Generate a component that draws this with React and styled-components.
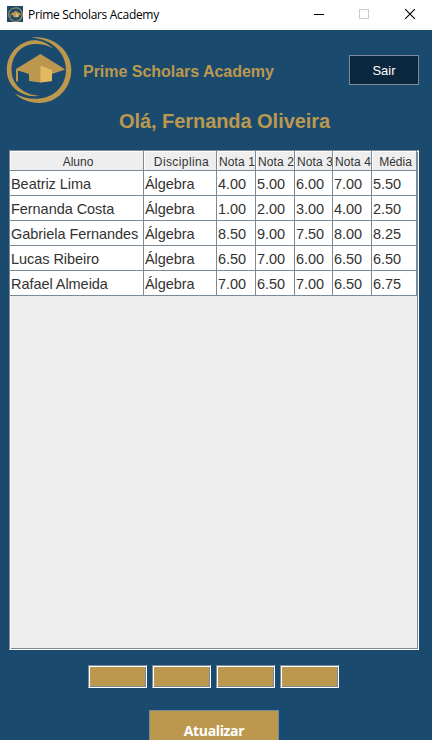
import React from "react";
import styled, { createGlobalStyle, css } from "styled-components";

const navy = "#1a4b6e";
const gold = "#bc984e";
const line = "#7a8a99";

const GlobalStyle = createGlobalStyle`
  * { box-sizing: border-box; }
  html, body { margin: 0; padding: 0; overflow: hidden; }
`;

const Window = styled.div`
  display: flex;
  flex-direction: column;
  width: 432px;
  height: 740px;
  overflow: hidden;
  background: ${navy};
  font-family: "Liberation Sans", Arial, sans-serif;
`;

const TitleBar = styled.header`
  display: flex;
  align-items: center;
  flex: none;
  height: 30px;
  padding-left: 7px;
  background: #fff;
`;

const AppIcon = styled.span`
  display: flex;
  align-items: center;
  justify-content: center;
  width: 16px;
  height: 16px;
  margin: 0 5px 2px 0;
  background: ${navy};
`;

const WindowTitle = styled.span`
  flex: 1;
  padding-bottom: 1px;
  font: 12px/16px "Open Sans", sans-serif;
  letter-spacing: -0.31px;
  white-space: nowrap;
  color: #000;
`;

const WindowControl = styled.span`
  display: flex;
  align-items: center;
  justify-content: center;
  width: 45.5px;
  height: 30px;
  padding: 0 0 2px 1px;
  color: ${(p) => (p.$disabled ? "#ccc" : "#000")};
`;

const Header = styled.div`
  display: flex;
  align-items: center;
  flex: none;
  height: 80px;
  padding: 0 13px 0 6px;
`;

const Brand = styled.span`
  flex: 1;
  margin: 3px 0 0 11px;
  font-size: 16px;
  font-weight: bold;
  letter-spacing: -0.03px;
  white-space: nowrap;
  color: ${gold};
`;

const Button = styled.button`
  flex: none;
  padding: 0;
  border: 1px solid ${line};
  border-radius: 0;
  color: #fff;
`;

const LogoutButton = styled(Button)`
  width: 70px;
  height: 30px;
  background: #0b273d;
  font: 13px "Liberation Sans", Arial, sans-serif;
`;

const RefreshButton = styled(Button)`
  align-self: center;
  width: 130px;
  height: 42px;
  margin: 22px 4px 0 0;
  padding-bottom: 2px;
  background: ${gold};
  font: bold 14px "Open Sans", sans-serif;
  letter-spacing: -0.35px;
`;

const Greeting = styled.h1`
  flex: none;
  height: 40px;
  margin: 0;
  padding-left: 17px;
  font-size: 20px;
  line-height: 22px;
  letter-spacing: -0.05px;
  text-align: center;
  color: ${gold};
`;

const etched = css`
  border: 1px solid;
  border-color: ${line} #fff #fff ${line};
  box-shadow: inset 1px 1px #fff, inset -1px -1px ${line};
`;

const TablePane = styled.div`
  flex: none;
  width: 410px;
  height: 500px;
  margin-left: 9px;
  background: #eee;
  ${etched}
`;

const Row = styled.div`
  display: grid;
  grid-template-columns: 134px 73px 39px 39px 38px 39px 45px;
  width: 407px;
`;

const HeadCell = styled.div`
  height: 20px;
  overflow: hidden;
  border-right: 1px solid ${line};
  border-bottom: 1px solid ${line};
  box-shadow: inset 1px 1px #fff;
  background: #eee;
  font-size: 12px;
  line-height: 22px;
  letter-spacing: ${(p) => p.$spacing || 0}px;
  text-align: ${(p) => (p.$narrow ? "left" : "center")};
  padding-left: ${(p) => (p.$narrow ? 2 : 3)}px;
  white-space: nowrap;
  color: #333;
`;

const Cell = styled.div`
  height: 25px;
  padding-left: 1px;
  overflow: hidden;
  border-right: 1px solid ${line};
  border-bottom: 1px solid ${line};
  background: #fff;
  font-size: 14.5px;
  line-height: 26px;
  letter-spacing: -0.05px;
  white-space: nowrap;
  color: #333;
`;

const Fields = styled.div`
  display: flex;
  flex: none;
  gap: 5px;
  margin: 15px 0 0 88px;
`;

const GradeField = styled.input`
  width: 59px;
  height: 23px;
  padding: 0 3px;
  border-radius: 0;
  outline: none;
  background: ${gold};
  ${etched}
`;

const columns = [
  { label: "Aluno" },
  { label: "Disciplina", spacing: 0.4 },
  { label: "Nota 1", narrow: true, spacing: 0.1 },
  { label: "Nota 2", narrow: true, spacing: 0.1 },
  { label: "Nota 3", narrow: true, spacing: 0.1 },
  { label: "Nota 4", narrow: true, spacing: 0.1 },
  { label: "Média" },
];

const students = [
  ["Beatriz Lima", "Álgebra", "4.00", "5.00", "6.00", "7.00", "5.50"],
  ["Fernanda Costa", "Álgebra", "1.00", "2.00", "3.00", "4.00", "2.50"],
  ["Gabriela Fernandes", "Álgebra", "8.50", "9.00", "7.50", "8.00", "8.25"],
  ["Lucas Ribeiro", "Álgebra", "6.50", "7.00", "6.00", "6.50", "6.50"],
  ["Rafael Almeida", "Álgebra", "7.00", "6.50", "7.00", "6.50", "6.75"],
];

function Logo({ size }) {
  return (
    <svg width={size} height={size} viewBox="0 0 66 66" aria-hidden="true">
      <g fill={gold}>
        <path d="M47.5 11.5C41 5.5 34 3.3 28 3.3C13 4 .8 17 .8 33C.8 49 15 61.5 34 58.8C18 58 5.5 48 5.5 33C5.5 19 15 7.5 28 7C35 6.6 41 8 47.5 11.5Z" />
        <path d="M25 .8C46-2.5 65.3 13 65.3 33C65.3 51 51 66 33 66C24 66 15 62.5 9 56.5C17 61 26 62.5 34 61.5C49 60 60 48 60 33C60 16 46 1.5 25 .8Z" />
        <path d="M34.5 17L59.3 32.5L46 37V44L34 45.5L23 44V37L12 33.5V44.5H10V32Z" />
      </g>
      <path d="M34.5 28.5L46 33V44L34.5 45.5Z" fill="#e2b962" />
    </svg>
  );
}

export default function App() {
  return (
    <>
      <GlobalStyle />
      <Window>
        <TitleBar>
          <AppIcon>
            <Logo size={15} />
          </AppIcon>
          <WindowTitle>Prime Scholars Academy</WindowTitle>
          <WindowControl>
            <svg width="10" height="10" shapeRendering="crispEdges">
              <path d="M0 5.5H10" stroke="currentColor" />
            </svg>
          </WindowControl>
          <WindowControl $disabled>
            <svg width="10" height="10" shapeRendering="crispEdges">
              <path d="M.5 .5H9.5V9.5H.5Z" fill="none" stroke="currentColor" />
            </svg>
          </WindowControl>
          <WindowControl>
            <svg width="10" height="10">
              <path d="M0 0L10 10M10 0L0 10" stroke="currentColor" strokeWidth="1.1" />
            </svg>
          </WindowControl>
        </TitleBar>
        <Header>
          <Logo size={66} />
          <Brand>Prime Scholars Academy</Brand>
          <LogoutButton>Sair</LogoutButton>
        </Header>
        <Greeting>Olá, Fernanda Oliveira</Greeting>
        <TablePane>
          <Row>
            {columns.map((c) => (
              <HeadCell key={c.label} $narrow={c.narrow} $spacing={c.spacing}>
                {c.label}
              </HeadCell>
            ))}
          </Row>
          {students.map((s) => (
            <Row key={s[0]}>
              {s.map((value, i) => (
                <Cell key={i}>{value}</Cell>
              ))}
            </Row>
          ))}
        </TablePane>
        <Fields>
          {[1, 2, 3, 4].map((n) => (
            <GradeField key={n} aria-label={`Nota ${n}`} />
          ))}
        </Fields>
        <RefreshButton>Atualizar</RefreshButton>
      </Window>
    </>
  );
}
